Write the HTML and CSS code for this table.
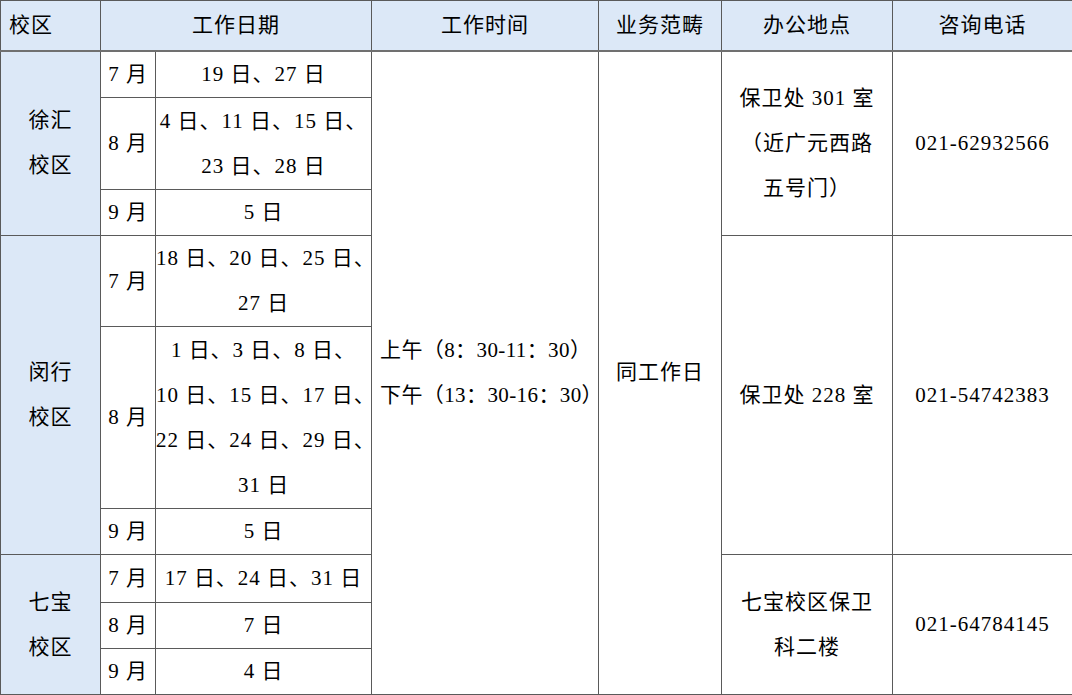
FILE: index.html
```html
<!DOCTYPE html>
<html lang="zh-CN">
<head>
<meta charset="utf-8">
<title>值班安排</title>
<link rel="stylesheet" href="styles.css">
</head>
<body>
<table class="schedule">
  <colgroup>
    <col class="c-campus">
    <col class="c-month">
    <col class="c-dates">
    <col class="c-time">
    <col class="c-scope">
    <col class="c-place">
    <col class="c-phone">
  </colgroup>
  <thead>
    <tr class="r-head">
      <th class="left">校区</th>
      <th colspan="2">工作日期</th>
      <th>工作时间</th>
      <th>业务范畴</th>
      <th>办公地点</th>
      <th>咨询电话</th>
    </tr>
  </thead>
  <tbody>
    <tr class="r47">
      <td rowspan="3" class="campus">徐汇<br>校区</td>
      <td>7 月</td>
      <td>19 日、27 日</td>
      <td rowspan="9" class="left time">上午（8：30-11：30）<br>下午（13：30-16：30）</td>
      <td rowspan="9">同工作日</td>
      <td rowspan="3">保卫处 301 室<br>（近广元西路<br>五号门）</td>
      <td rowspan="3">021-62932566</td>
    </tr>
    <tr class="r92">
      <td>8 月</td>
      <td>4 日、11 日、15 日、<br>23 日、28 日</td>
    </tr>
    <tr class="r46">
      <td>9 月</td>
      <td>5 日</td>
    </tr>
    <tr class="r91">
      <td rowspan="3" class="campus">闵行<br>校区</td>
      <td>7 月</td>
      <td>18 日、20 日、25 日、<br>27 日</td>
      <td rowspan="3">保卫处 228 室</td>
      <td rowspan="3">021-54742383</td>
    </tr>
    <tr class="r182">
      <td>8 月</td>
      <td>1 日、3 日、8 日、<br>10 日、15 日、17 日、<br>22 日、24 日、29 日、<br>31 日</td>
    </tr>
    <tr class="r46">
      <td>9 月</td>
      <td>5 日</td>
    </tr>
    <tr class="r48">
      <td rowspan="3" class="campus">七宝<br>校区</td>
      <td>7 月</td>
      <td>17 日、24 日、31 日</td>
      <td rowspan="3">七宝校区保卫<br>科二楼</td>
      <td rowspan="3">021-64784145</td>
    </tr>
    <tr class="r46">
      <td>8 月</td>
      <td>7 日</td>
    </tr>
    <tr class="r45">
      <td>9 月</td>
      <td>4 日</td>
    </tr>
  </tbody>
</table>
</body>
</html>
```

FILE: styles.css
```css
html, body {
  margin: 0;
  padding: 0;
  background: #ffffff;
}

.schedule {
  border-collapse: collapse;
  table-layout: fixed;
  width: 1072px;
  font-family: "Liberation Serif", "Noto Sans CJK SC", serif;
  font-size: 21px;
  letter-spacing: 1px;
  color: #000000;
}

.c-campus { width: 100px; }
.c-month { width: 55px; }
.c-dates { width: 216px; }
.c-time { width: 227px; }
.c-scope { width: 123px; }
.c-place { width: 171px; }
.c-phone { width: 180px; }

.schedule th,
.schedule td {
  border: 1px solid #5a5a5a;
  padding: 0;
  text-align: center;
  vertical-align: middle;
  line-height: 45px;
  white-space: nowrap;
  font-weight: normal;
}

.schedule th {
  background: #dce8f7;
  border-bottom: 2px solid #707070;
}

.schedule .left {
  text-align: left;
  padding-left: 8px;
}

.schedule .campus {
  background: #dce8f7;
}

.schedule .time {
  padding-left: 8px;
  letter-spacing: 0.4px;
}

.r-head { height: 50px; }
.r45 { height: 45px; }
.r46 { height: 46px; }
.r47 { height: 47px; }
.r48 { height: 48px; }
.r91 { height: 91px; }
.r92 { height: 92px; }
.r182 { height: 182px; }
```
